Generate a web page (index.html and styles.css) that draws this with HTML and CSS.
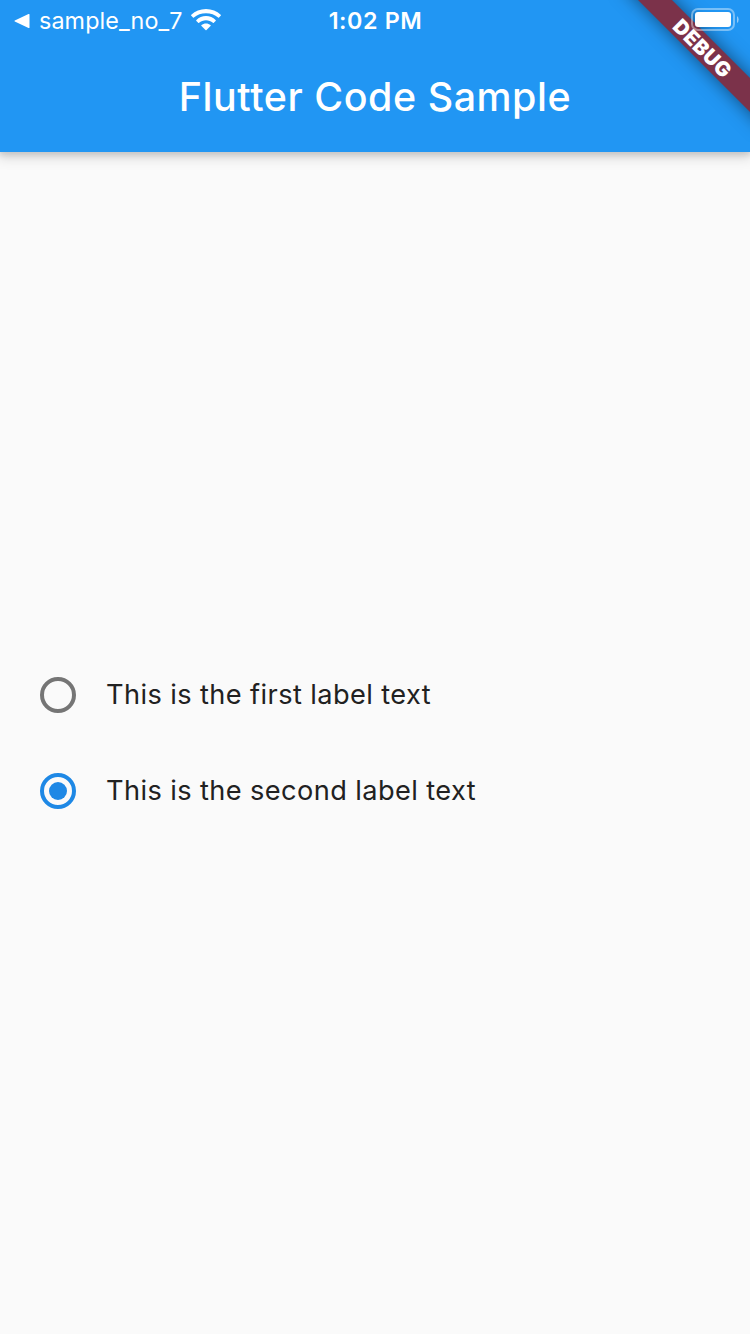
FILE: index.html
```html
<!DOCTYPE html>
<html lang="en">
<head>
<meta charset="utf-8">
<title>Flutter Code Sample</title>
<link rel="stylesheet" href="styles.css">
</head>
<body>
<div class="screen">
  <header class="app-bar">
    <div class="status-bar">
      <div class="status-left">
        <svg class="back-icon" width="16" height="16" viewBox="0 0 16 16"><path d="M15.500 1.600v12.800q0 1-1 .5L.8 8.600q-.8-.6 0-1.200L14.500 1.100q1-.5 1 .5z" fill="#fff"/></svg>
        <span class="back-label">sample_no_7</span>
        <svg class="wifi-icon" width="30" height="22" viewBox="0 0 30 22"><path d="M15 0C9.300 0 4.100 2.200.3 5.800q-.5.5 0 1l1.700 1.700q.4.4.9 0C6.100 5.700 10.300 4.200 15 4.200s8.900 1.500 12.100 4.300q.5.400.9 0l1.700-1.700q.5-.5 0-1C25.900 2.200 20.700 0 15 0zM15 7.100c-3.700 0-7.100 1.400-9.600 3.900q-.5.5 0 1l1.800 1.800q.4.400.9 0c1.800-1.600 4.200-2.500 6.900-2.500s5.100.9 6.900 2.500q.5.400.9 0l1.800-1.800q.5-.5 0-1C22.100 8.500 18.700 7.100 15 7.100zM15 14.400c-1.700 0-3.300.7-4.500 1.700q-.5.5 0 1l4 4q.5.500 1 0l4-4q.5-.5 0-1c-1.200-1-2.800-1.700-4.500-1.700z" fill="#fff"/></svg>
      </div>
      <div class="status-time">1:02 PM</div>
      <svg class="battery-icon" width="48" height="24" viewBox="0 0 48 24"><rect x="1" y="1" width="42" height="21" rx="6" fill="none" stroke="#fff" stroke-opacity=".4" stroke-width="2"/><rect x="4" y="4" width="36" height="15" rx="3" fill="#fff"/><path d="M46 8q1.700 1.200 1.700 3.500T46 15z" fill="#fff" fill-opacity=".5"/></svg>
    </div>
    <h1 class="title">Flutter Code Sample</h1>
    <div class="banner-clip"><div class="banner"><span>DEBUG</span></div></div>
  </header>
  <main class="content">
    <div class="option"><span class="radio"></span><span class="option-label">This is the first label text</span></div>
    <div class="option"><span class="radio selected"></span><span class="option-label">This is the second label text</span></div>
  </main>
</div>
</body>
</html>
```

FILE: styles.css
```css
body {
  margin: 0;
  background: #fafafa;
  font-family: Inter, "Liberation Sans", sans-serif;
}

.screen {
  display: flex;
  flex-direction: column;
  width: 750px;
  height: 1334px;
  overflow: hidden;
}

.app-bar {
  position: relative;
  height: 152px;
  flex: none;
  background: #2196f3;
  color: #fff;
  box-shadow: 0 2px 6px 1px rgba(0, 0, 0, .12), 0 4px 12px 2px rgba(0, 0, 0, .13);
}

.status-bar {
  position: relative;
  z-index: 2;
  display: grid;
  grid-template-columns: 1fr auto 1fr;
  grid-template-rows: 40px;
  align-items: center;
  height: 40px;
  padding: 0 11px 0 14px;
}

.status-left {
  display: flex;
  align-items: center;
}

.back-icon {
  margin-top: 1px;
}

.back-label {
  margin-left: 9px;
  padding-top: 2px;
  font-size: 23.3px;
  line-height: 38px;
  letter-spacing: .12px;
  white-space: nowrap;
}

.wifi-icon {
  margin-left: 8.500px;
}

.status-time {
  padding-top: 2px;
  margin-right: 2px;
  font-size: 23.3px;
  font-weight: 600;
  line-height: 38px;
  letter-spacing: .6px;
}

.battery-icon {
  justify-self: end;
}

.title {
  margin: 0;
  padding-top: 1px;
  font-size: 39.4px;
  font-weight: 500;
  line-height: 113px;
  text-align: center;
  letter-spacing: .55px;
}

.banner-clip {
  position: absolute;
  z-index: 1;
  top: 0;
  right: 0;
  width: 152px;
  height: 152px;
  overflow: hidden;
}

.banner {
  position: absolute;
  left: 4.500px;
  top: 35.500px;
  width: 200px;
  height: 24px;
  transform: rotate(45deg);
  background: #7b324a;
  box-shadow: 0 0 18px rgba(0, 0, 0, .5);
  font-size: 20.4px;
  font-weight: 900;
  line-height: 25px;
  text-align: center;
  letter-spacing: .4px;
}

.content {
  display: flex;
  flex: 1;
  flex-direction: column;
  justify-content: center;
  padding: 0 40px;
}

.option {
  display: flex;
  align-items: center;
  height: 96px;
}

.radio {
  display: flex;
  align-items: center;
  justify-content: center;
  box-sizing: border-box;
  width: 36px;
  height: 36px;
  border: 4px solid #757575;
  border-radius: 50%;
}

.radio.selected {
  border-color: #1e88e5;
}

.radio.selected::before {
  content: "";
  width: 18px;
  height: 18px;
  border-radius: 50%;
  background: #1e88e5;
}

.option-label {
  margin-left: 30px;
  padding-bottom: 1px;
  color: #212121;
  font-size: 27.2px;
  font-weight: 400;
  line-height: 40px;
  letter-spacing: .4px;
}
```
